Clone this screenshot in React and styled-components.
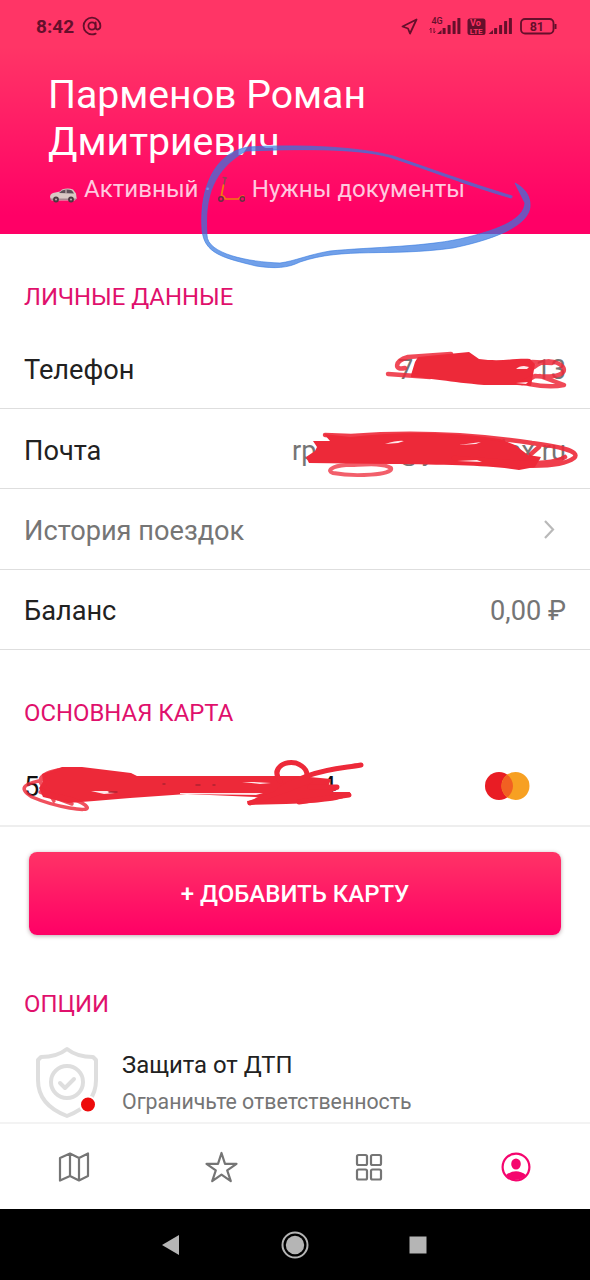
import React from "react";
import styled, { createGlobalStyle } from "styled-components";

const GlobalStyle = createGlobalStyle`
  * {
    box-sizing: border-box;
  }

  body {
    margin: 0;
    background: #ffffff;
    font-family: Roboto, "Liberation Sans", sans-serif;
  }
`;

const Screen = styled.div`
  width: 590px;
  height: 1280px;
  display: flex;
  flex-direction: column;
  overflow: hidden;
`;

const Header = styled.header`
  position: relative;
  flex: none;
  height: 234px;
  background: linear-gradient(#ff3566 0%, #ff3566 20%, #ff0066 92%);
`;

const StatusBar = styled.div`
  height: 52px;
  padding: 0 32px 0 36px;
  display: flex;
  align-items: center;
  justify-content: space-between;
  color: #650f2b;
`;

const StatusGroup = styled.div`
  display: flex;
  align-items: center;
  column-gap: 8px;
`;

const Clock = styled.span`
  font-size: 19px;
  font-weight: 700;
`;

const UserName = styled.h1`
  margin: 20px 48px 0;
  width: 400px;
  font-size: 39.2px;
  line-height: 46.5px;
  font-weight: 400;
  color: #ffffff;
`;

const Statuses = styled.div`
  margin: 7px 49px 0;
  height: 34px;
  display: flex;
  align-items: center;
  font-size: 24.1px;
  line-height: 32px;
  color: #ffc9df;
  white-space: pre;
`;

const VehicleIcon = styled.svg`
  flex: none;
  width: 28px;
  height: 28px;
  margin-right: 7px;
`;

const Content = styled.main`
  flex: 1;
  min-height: 0;
  overflow: hidden;
`;

const SectionTitle = styled.h2`
  margin: 0;
  height: ${(props) => props.$height}px;
  padding: ${(props) => props.$top}px 24px 0;
  font-size: 23.9px;
  line-height: 28px;
  font-weight: 400;
  color: #e0106c;
`;

const Row = styled.div`
  position: relative;
  height: 80.4px;
  padding: 4px 24px 0;
  display: flex;
  align-items: center;
  justify-content: space-between;
  border-bottom: ${(props) => (props.$thick ? "2px solid #eeeeee" : "1px solid #dedede")};
  font-size: 27.2px;
  color: ${(props) => (props.$muted ? "#757575" : "#212121")};
`;

const Value = styled.div`
  width: ${(props) => (props.$width ? `${props.$width}px` : "auto")};
  display: flex;
  justify-content: space-between;
  color: ${(props) => (props.$dark ? "#111111" : "#757575")};
`;

const Scribble = styled.svg`
  position: absolute;
  left: 0;
  top: 0;
  width: 590px;
  height: ${(props) => props.$height}px;
  overflow: visible;
  pointer-events: none;
  stroke-linecap: round;
  stroke-linejoin: round;
`;

const Chevron = styled.svg`
  width: 14px;
  height: 22px;
  margin: -2px 10px 0 0;
`;

const CardLogo = styled.svg`
  width: 46px;
  height: 30px;
  margin: -3px 36px 0 0;
`;

const AddCard = styled.button`
  display: block;
  margin: 25px 29px 0;
  width: 532px;
  height: 83px;
  padding: 2px 0 0;
  border: 0;
  border-radius: 8px;
  background: linear-gradient(#ff3366, #ff0066);
  box-shadow: 0 1px 4px rgba(60, 0, 20, 0.35);
  font-family: inherit;
  font-size: 24px;
  font-weight: 500;
  color: #ffffff;
`;

const Option = styled.div`
  display: flex;
  padding-left: 34px;
`;

const ShieldIcon = styled.svg`
  width: 66px;
  height: 76px;
  margin-right: 22px;
`;

const OptionText = styled.div`
  padding-top: 5px;
`;

const OptionName = styled.div`
  font-size: 23.9px;
  line-height: 32px;
  color: #212121;
`;

const OptionHint = styled.div`
  margin-top: 7px;
  font-size: 21.3px;
  line-height: 28px;
  color: #757575;
`;

const TabBar = styled.nav`
  flex: none;
  height: 87px;
  border-top: 2px solid #f3f3f3;
  display: grid;
  grid-template-columns: repeat(4, 1fr);
  align-items: center;
  justify-items: center;
  background: #ffffff;
`;

const TabIcon = styled.svg`
  width: 36px;
  height: 36px;
  fill: none;
  stroke: ${(props) => (props.$active ? "#f5056e" : "#757575")};
  stroke-width: 2.2;
  stroke-linejoin: round;
`;

const SystemBar = styled.div`
  flex: none;
  height: 71px;
  padding: 0 157px;
  display: flex;
  align-items: center;
  justify-content: space-between;
  background: #000000;
`;

const SystemIcon = styled.svg`
  width: 30px;
  height: 30px;
  fill: #b5b5b5;
`;

const signalBars = [
  [4.6, 11, 6],
  [9.6, 8, 9],
  [14.6, 4, 13],
  [19.4, 1, 16],
];

function Signal({ x = 0 }) {
  return (
    <g transform={`translate(${x} 0)`}>
      <path d="M-1 17 3.500 13v4Z" />
      {signalBars.map(([left, top, height]) => (
        <rect key={left} x={left} y={top} width="3" height={height} rx=".6" />
      ))}
    </g>
  );
}

function StatusIcons() {
  return (
    <svg width="158" height="24" viewBox="400 14 158 24" fill="#650f2b" fontFamily="Roboto" fontWeight="700">
      <path d="M402.500 26.500 416.500 19.500 410 33.500 408 28.500Z" fill="none" stroke="#650f2b" strokeWidth="1.800" strokeLinejoin="round" />
      <text x="431.500" y="23.500" fontSize="9" fontWeight="500">4G</text>
      <path d="M431 33v-5m-1.400 1.600 1.400-1.600M434 28v5m1.400-1.600-1.400 1.600" stroke="#650f2b" strokeWidth=".9" fill="none" />
      <g transform="translate(0 17)">
        <Signal x={438} />
        <Signal x={489.5} />
      </g>
      <rect x="467.500" y="18.500" width="18" height="16.500" rx="2.500" />
      <text x="470" y="26.400" fontSize="9" fill="#ff3566">Vo</text>
      <text x="469.700" y="34" fontSize="8" fill="#ff3566">LTE</text>
      <rect x="521" y="19" width="32.500" height="14.500" rx="4" fill="none" stroke="#650f2b" strokeWidth="1.800" />
      <path d="M555.500 24v5" stroke="#650f2b" strokeWidth="2" />
      <text x="536.800" y="30.700" fontSize="12.500" textAnchor="middle">81</text>
    </svg>
  );
}

function Car() {
  return (
    <VehicleIcon viewBox="49 174 28 28">
      <path d="M50 196q0-3 3-4l7-1.500 2-2q6-2 11 0l3 4 .7 5-2 2H51.500Z" fill="#d9c9c4" />
      <path d="m59 192 3-2.600q6-1.800 10 .2l2 3Z" fill="#5e5058" />
      <path d="M66 188.800v3.500" stroke="#d9c9c4" />
      <path d="M50 197.500h26v1.500H51Z" fill="#a98991" />
      <circle cx="56" cy="198.500" r="2.900" fill="#4b3840" />
      <circle cx="71" cy="198.500" r="2.900" fill="#4b3840" />
      <circle cx="56" cy="198.500" r="1.100" fill="#b3a4aa" />
      <circle cx="71" cy="198.500" r="1.100" fill="#b3a4aa" />
    </VehicleIcon>
  );
}

function Scooter() {
  return (
    <VehicleIcon viewBox="216.500 175 28 28" fill="none" strokeLinecap="round">
      <path d="m223.500 185 1.300-7m-2-.5 3.200.5" stroke="#8f4258" strokeWidth="1.500" />
      <path d="m223 185-2 10q3 1 4 4h13q2-3 5-3" stroke="#f47b10" strokeWidth="1.700" />
      <circle cx="220.500" cy="199" r="2.200" stroke="#663044" strokeWidth="1.500" />
      <circle cx="242" cy="199" r="2.200" stroke="#663044" strokeWidth="1.500" />
    </VehicleIcon>
  );
}

function App() {
  return (
    <Screen>
      <GlobalStyle />
      <Header>
        <StatusBar>
          <StatusGroup>
            <Clock>8:42</Clock>
            <svg width="20" height="20" viewBox="0 0 20 20" fill="none" stroke="#650f2b" strokeWidth="1.800" strokeLinecap="round">
              <circle cx="10" cy="10" r="3.600" />
              <path d="M13.600 6.500v5q.3 2 2.200 2 2.600-.5 2.600-3.500a8.400 8.400 0 1 0-8.400 8.400q2 0 3.700-.8" />
            </svg>
          </StatusGroup>
          <StatusIcons />
        </StatusBar>
        <UserName>Парменов Роман Дмитриевич</UserName>
        <Statuses>
          <Car />
          <span>Активный · </span>
          <Scooter />
          <span>Нужны документы</span>
        </Statuses>
        <Scribble $height={234} viewBox="0 0 590 234">
          <path
            d="M512 196 C472 184 431 169 393 156 C360 147 301 144 248 147 C218 152 199 183 202 230 C204 254 224 258 256 266 C275 269 288 268 300 262 C343 247 389 257 453 248 C501 238 528 224 530 207 C531 195 523 187 515 183 L525 203 C524 219 500 229 468 237 C430 247 370 247 330 251 C307 255 295 261 280 263 C249 262 207 254 207 235 C204 196 214 169 246 151 C295 149 357 148 389 157 C429 170 472 187 511 198Z"
            fill="#3478df"
            fillOpacity=".7"
            stroke="#3478df"
            strokeOpacity=".6"
            strokeWidth="1"
          />
        </Scribble>
      </Header>

      <Content>
        <SectionTitle $height={94.6} $top={48.5}>ЛИЧНЫЕ ДАННЫЕ</SectionTitle>
        <Row>
          <span>Телефон</span>
          <Value $width={168}>
            <span>7</span>
            <span>13</span>
          </Value>
          <Scribble $height={80} viewBox="0 328 590 80">
            <path d="M411 374 415 361 418 356 438 354 469 351 479 358C501 361 516 357 530 358L535 363 531 385 517 384 484 384C450 381 430 377 411 376Z" fill="#ed2939" />
            <path d="M405 367C394 370 394 360 408 356L451 353M388 373 430 376" stroke="#ed2939" strokeWidth="4.500" fill="none" opacity=".85" />
            <path d="M534 366C544 358 556 359 563 366 567 373 557 377 535 375L522 382M532 361 552 362M540 375 564 384Q550 387 529 383" stroke="#ed2939" strokeWidth="4.500" fill="none" opacity=".85" />
            <path d="M516 368q3-3 8-3l5 1-2 2ZM516 382l12-1-2 2Z" fill="#ffe6e9" />
          </Scribble>
        </Row>
        <Row>
          <span>Почта</span>
          <Value $width={274}>
            <span>rpar</span>
            <span>@y</span>
            <span>dex.ru</span>
          </Value>
          <Scribble $height={80} viewBox="0 408 590 80">
            <path d="M324 433 350 436C410 429 459 432 500 438L515 444 528 454 541 456 535 466 519 469C490 464 450 464 390 463L309 462 306 456 315 450 317 446 313 440 330 440Z" fill="#ed2939" />
            <path d="M325 434 351 435C430 429 492 436 532 442 556 445 582 450 574 457 558 469 511 466 454 457L509 461C535 464 558 461 565 456M539 446 531 453" stroke="#ed2939" strokeWidth="4.500" fill="none" opacity=".9" />
            <path d="M346 464C332 465 326 470 333 472 354 476 394 474 391 467 382 461 361 464 346 464Z" stroke="#ed2939" strokeWidth="4" fill="none" opacity=".75" />
            <path d="M385 443q13-4 19-3l-6 2ZM459 444l22-3-5 2ZM457 460l20-1 5 2Z" fill="#ffe8eb" />
          </Scribble>
        </Row>
        <Row $muted>
          <span>История поездок</span>
          <Chevron viewBox="0 0 14 22" fill="none" stroke="#b9b9b9" strokeWidth="2.200">
            <path d="m3 2 8 8.500L3 19" />
          </Chevron>
        </Row>
        <Row>
          <span>Баланс</span>
          <Value>0,00 ₽</Value>
        </Row>

        <SectionTitle $height={96} $top={49}>ОСНОВНАЯ КАРТА</SectionTitle>
        <Row $thick>
          <Value $dark $width={312}>
            <span>5</span>
            <span>4</span>
          </Value>
          <CardLogo viewBox="0 0 46 30">
            <circle cx="15" cy="15" r="14" fill="#e91c24" />
            <circle cx="31.500" cy="15" r="14" fill="#f7a022" />
            <path d="M23.250 3.700a14 14 0 0 1 0 22.600 14 14 0 0 1 0-22.600" fill="#f16022" />
          </CardLogo>
          <Scribble $height={80} viewBox="0 746 590 80">
            <path d="M42 774 62 767 82 767 131 773 137 776 268 776 299 776 331 779 328 787 339 789 332 792 350 792C350 800 324 803 286 804L248 805 247 801 262 799 255 797 187 794 130 798 94 801 68 803 43 797 39 788 43 782Z" fill="#ed2939" />
            <path d="M58 770C33 775 39 785 48 789M48 779C26 783 16 787 32 797 55 807 91 813 87 807 82 800 64 797 40 792L72 804M43 783 54 801" stroke="#ed2939" strokeWidth="3.500" fill="none" opacity=".82" />
            <path d="M280 781C271 768 284 761 296 763 308 768 311 776 300 784 275 797 264 793 307 776 329 768 343 768 361 765M250 803 310 781M299 802 349 795M310 787H337" stroke="#ed2939" strokeWidth="5" fill="none" />
            <path d="m91 791 16 0 8 2-11 1ZM180 793h83l-7 2-76-1M242 782h12l17 1-11 1Z" fill="#ffe6e9" />
            <path d="M163 784h2m31 1h4m13 0h2m-106 7h8" stroke="#ad2231" strokeWidth="1.400" />
          </Scribble>
        </Row>
        <AddCard>+ ДОБАВИТЬ КАРТУ</AddCard>

        <SectionTitle $height={109} $top={55.5}>ОПЦИИ</SectionTitle>
        <Option>
          <ShieldIcon viewBox="34 1044 66 76" fill="none" stroke="#dedede" strokeWidth="4" strokeLinejoin="round" strokeLinecap="round">
            <path d="M67 1049Q57 1057 41 1057L38 1060V1080Q38 1105 67 1116 96 1105 96 1080V1060L93 1057Q77 1057 67 1049Z" />
            <circle cx="67" cy="1082" r="16" />
            <path d="m60 1083 5 5 9-9" />
            <circle cx="88" cy="1104.500" r="8" fill="#ed0b0b" stroke="#ffffff" strokeWidth="2" />
          </ShieldIcon>
          <OptionText>
            <OptionName>Защита от ДТП</OptionName>
            <OptionHint>Ограничьте ответственность</OptionHint>
          </OptionText>
        </Option>
      </Content>

      <TabBar>
        <TabIcon viewBox="0 0 36 36">
          <path d="M4 9 14 4.500 23 9l9-4.500V27l-9 4.500-9-4.500-10 4.500ZM14 4.500V27M23 9v22.500" />
        </TabIcon>
        <TabIcon viewBox="0 0 36 36">
          <path d="M18.500 4 22 14.800h11.500l-9.300 6.600 3.600 10.800-9.300-6.600-9.300 6.600 3.600-10.800-9.300-6.600H15Z" />
        </TabIcon>
        <TabIcon viewBox="0 0 36 36">
          <rect x="6" y="6" width="10" height="10" rx="1.500" />
          <rect x="20" y="6" width="10" height="10" rx="1.500" />
          <rect x="6" y="20.500" width="10" height="10" rx="1.500" />
          <rect x="20" y="20.500" width="10" height="10" rx="1.500" />
        </TabIcon>
        <TabIcon $active viewBox="0 0 36 36">
          <circle cx="18" cy="18" r="13.400" />
          <ellipse cx="18" cy="15" rx="4.800" ry="5.500" fill="#f5056e" stroke="none" />
          <path d="M8 26q10-7.500 20 0A13 13 0 0 1 8 26Z" fill="#f5056e" stroke="none" />
        </TabIcon>
      </TabBar>

      <SystemBar>
        <SystemIcon viewBox="0 0 30 30">
          <path d="M5 15 22 5v20Z" />
        </SystemIcon>
        <SystemIcon viewBox="0 0 30 30">
          <circle cx="15" cy="15" r="12.500" fill="none" stroke="#b5b5b5" strokeWidth="2" />
          <circle cx="15" cy="15" r="9.200" />
        </SystemIcon>
        <SystemIcon viewBox="0 0 30 30">
          <path d="M6.500 6.500h17v17h-17Z" />
        </SystemIcon>
      </SystemBar>
    </Screen>
  );
}

export default App;
